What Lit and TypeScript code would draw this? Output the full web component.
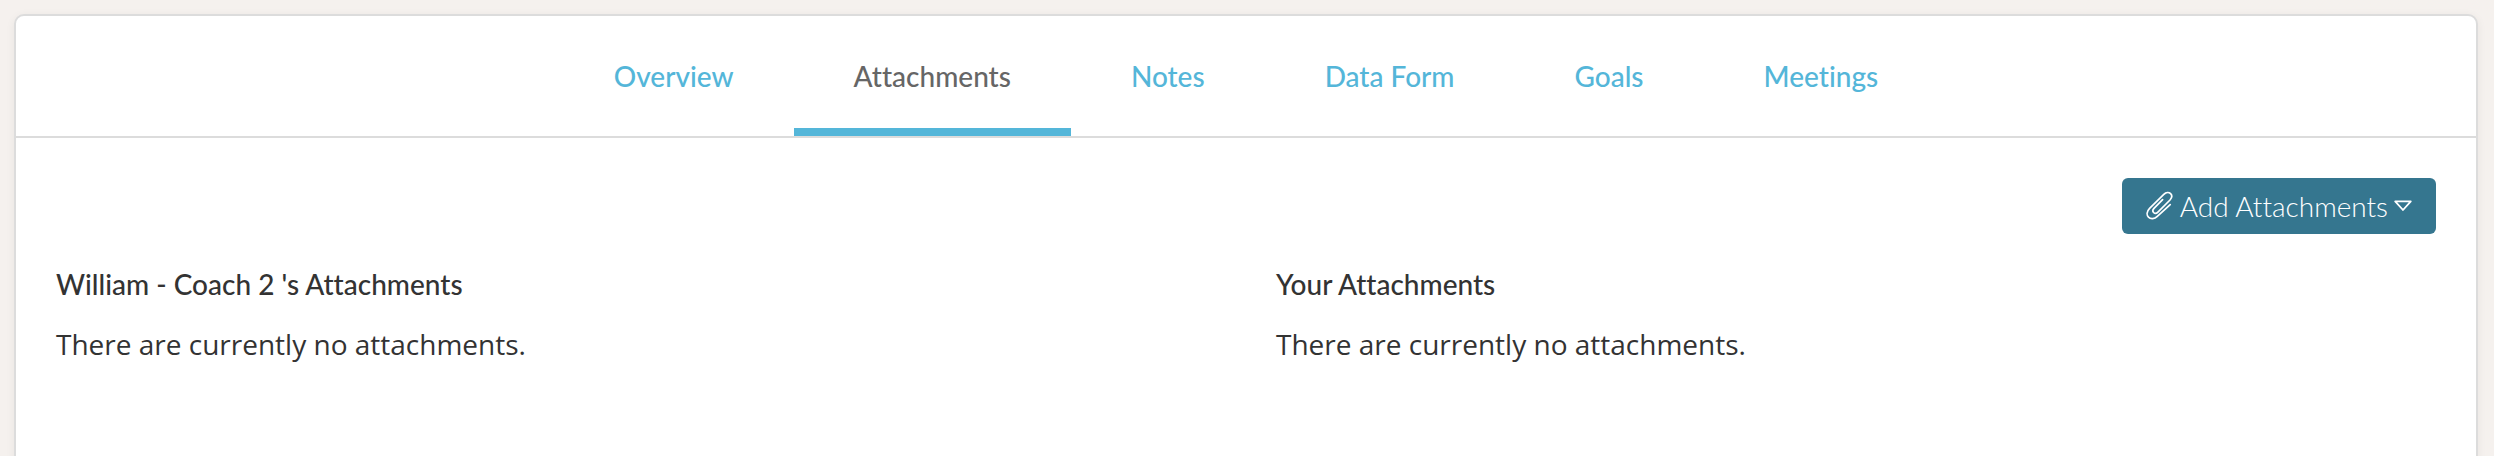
import { LitElement, html, css } from "lit";
import { customElement, state } from "lit/decorators.js";

const TABS = ["Overview", "Attachments", "Notes", "Data Form", "Goals", "Meetings"];

@customElement("app-root")
export class AppRoot extends LitElement {
  static styles = css`
    :host {
      display: block;
      box-sizing: border-box;
      height: 100vh;
      overflow: hidden;
      padding: 14px 16px 0 14px;
      background: #f5f1ee;
      color: #333;
      font-family: "Open Sans", sans-serif;
      font-size: 28px;
      line-height: 40px;
      font-variant-ligatures: none;
    }
    .card {
      box-sizing: border-box;
      min-height: 100vh;
      border: 2px solid #dcdcdc;
      border-radius: 10px;
      background: #fff;
      box-shadow: 0 2px 10px rgba(0, 0, 0, 0.06);
    }
    .tabs {
      display: flex;
      justify-content: center;
      border-bottom: 2px solid #dcdcdc;
    }
    .tab {
      padding: 40px 60px 32px;
      border-bottom: 8px solid transparent;
      color: #54b6d9;
      font-family: Lato, sans-serif;
      font-weight: 500;
      text-decoration: none;
      white-space: nowrap;
    }
    .tab.active {
      border-bottom-color: #54b6d9;
      color: #666;
    }
    .content {
      padding: 40px;
    }
    .actions {
      display: flex;
      justify-content: flex-end;
      margin-bottom: 30px;
    }
    .add {
      display: flex;
      align-items: center;
      gap: 6px;
      height: 56px;
      padding: 0 24px;
      border: 0;
      border-radius: 6px;
      background: #35768f;
      color: #fff;
      font-family: Lato, sans-serif;
      font-size: 28px;
      font-weight: 300;
      line-height: 40px;
      font-variant-ligatures: none;
      cursor: pointer;
    }
    .clip {
      width: 28px;
      height: 30px;
    }
    .caret {
      width: 18px;
      height: 12px;
    }
    .columns {
      display: grid;
      grid-template-columns: 1fr 1fr;
      gap: 60px;
    }
    h2 {
      margin: 0 0 20px;
      font-family: Lato, sans-serif;
      font-size: 28px;
      font-weight: 500;
      line-height: 40px;
    }
    p {
      margin: 0;
    }
  `;

  @state() private active = "Attachments";

  private select(event: Event, tab: string) {
    event.preventDefault();
    this.active = tab;
  }

  render() {
    return html`
      <main class="card">
        <nav class="tabs">
          ${TABS.map(
            (tab) => html`<a
              class="tab ${tab === this.active ? "active" : ""}"
              href="#"
              @click=${(event: Event) => this.select(event, tab)}
              >${tab}</a
            >`
          )}
        </nav>
        <div class="content">
          <div class="actions">
            <button class="add" type="button" aria-haspopup="menu">
              <svg class="clip" viewBox="0 0 28 30" fill="none" stroke="#fff" stroke-width="1.7" stroke-linecap="round" stroke-linejoin="round" aria-hidden="true">
                <path d="M16.6 8.6 8 17.4c-1.400 1.500-1.400 3.100-.4 4.100 1.100 1.100 2.900 1 4.300-.4L24 9c2-2.200 2.200-4.700.6-6.300-1.700-1.700-4.600-1.500-6.800.6L3.600 17.400c-2.900 3-3.200 6.600-1.100 8.800 2.200 2.200 6 1.900 8.800-.9L24.200 13.600" />
              </svg>
              <span>Add Attachments</span>
              <svg class="caret" viewBox="0 0 18 12" fill="none" stroke="#fff" stroke-width="1.800" stroke-linejoin="round" aria-hidden="true">
                <path d="M1.200 1.300h15.600L9 10z" />
              </svg>
            </button>
          </div>
          <div class="columns">
            <section>
              <h2>William - Coach 2 's Attachments</h2>
              <p>There are currently no attachments.</p>
            </section>
            <section>
              <h2>Your Attachments</h2>
              <p>There are currently no attachments.</p>
            </section>
          </div>
        </div>
      </main>
    `;
  }
}
